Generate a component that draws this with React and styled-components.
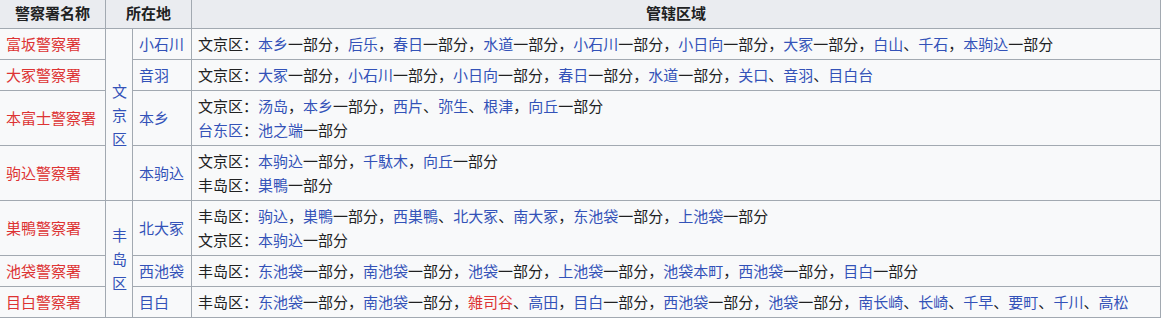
import React from 'react';
import styled, { createGlobalStyle } from 'styled-components';

const GlobalStyle = createGlobalStyle`
  body {
    margin: 0;
    background: #ffffff;
    font-family: "Noto Sans CJK SC", "Noto Sans", sans-serif;
  }
`;

const Table = styled.table`
  width: 1162px;
  margin: -3px 0 0 -1px;
  border-collapse: collapse;
  table-layout: fixed;
  background: #f8f9fa;
  color: #202122;
  font-size: 15px;
  line-height: 24px;
  border: 1px solid #a2a9b1;
`;

const HeadCell = styled.th`
  background: #eaecf0;
  border: 1px solid #a2a9b1;
  padding: 3px 6px;
  font-weight: bold;
  text-align: center;
  white-space: nowrap;
`;

const Cell = styled.td`
  border: 1px solid #a2a9b1;
  padding: 3px 6px;
  vertical-align: middle;
  text-align: ${(props) => props.$align || 'left'};
  white-space: ${(props) => (props.$wrap ? 'normal' : 'nowrap')};
`;

const Line = styled.div`
  white-space: nowrap;
`;

const Link = styled.a`
  color: ${(props) => (props.$red ? '#d33' : '#3352b8')};
  text-decoration: none;
`;

// [..] 蓝色链接, {..} 红色链接
const rich = (text) =>
  text.split(/(\[[^\]]+\]|\{[^}]+\})/).map((part, i) => {
    if (part.startsWith('[')) return <Link key={i}>{part.slice(1, -1)}</Link>;
    if (part.startsWith('{')) return <Link key={i} $red>{part.slice(1, -1)}</Link>;
    return part;
  });

const rows = [
  {
    name: '富坂警察署',
    ward: { text: '文京区', span: 4 },
    place: '小石川',
    lines: [
      '文京区：[本乡]一部分，[后乐]，[春日]一部分，[水道]一部分，[小石川]一部分，[小日向]一部分，[大冢]一部分，[白山]、[千石]，[本驹込]一部分',
    ],
  },
  {
    name: '大冢警察署',
    place: '音羽',
    lines: ['文京区：[大冢]一部分，[小石川]一部分，[小日向]一部分，[春日]一部分，[水道]一部分，[关口]、[音羽]、[目白台]'],
  },
  {
    name: '本富士警察署',
    place: '本乡',
    lines: ['文京区：[汤岛]，[本乡]一部分，[西片]、[弥生]、[根津]，[向丘]一部分', '[台东区]：[池之端]一部分'],
  },
  {
    name: '驹込警察署',
    place: '本驹込',
    lines: ['文京区：[本驹込]一部分，[千駄木]，[向丘]一部分', '丰岛区：[巣鴨]一部分'],
  },
  {
    name: '巣鴨警察署',
    ward: { text: '丰岛区', span: 3 },
    place: '北大冢',
    lines: [
      '丰岛区：[驹込]，[巣鴨]一部分，[西巣鴨]、[北大冢]、[南大冢]，[东池袋]一部分，[上池袋]一部分',
      '文京区：[本驹込]一部分',
    ],
  },
  {
    name: '池袋警察署',
    place: '西池袋',
    lines: ['丰岛区：[东池袋]一部分，[南池袋]一部分，[池袋]一部分，[上池袋]一部分，[池袋本町]，[西池袋]一部分，[目白]一部分'],
  },
  {
    name: '目白警察署',
    place: '目白',
    lines: [
      '丰岛区：[东池袋]一部分，[南池袋]一部分，{雑司谷}、[高田]，[目白]一部分，[西池袋]一部分，[池袋]一部分，[南长崎]、[长崎]、[千早]、[要町]、[千川]、[高松]',
    ],
  },
];

export default function App() {
  return (
    <>
      <GlobalStyle />
      <Table>
        <colgroup>
          <col style={{ width: 106 }} />
          <col style={{ width: 27 }} />
          <col style={{ width: 59 }} />
          <col />
        </colgroup>
        <thead>
          <tr>
            <HeadCell>警察署名称</HeadCell>
            <HeadCell colSpan={2}>所在地</HeadCell>
            <HeadCell>管辖区域</HeadCell>
          </tr>
        </thead>
        <tbody>
          {rows.map((row) => (
            <tr key={row.name}>
              <Cell>
                <Link $red>{row.name}</Link>
              </Cell>
              {row.ward && (
                <Cell rowSpan={row.ward.span} $align="center" $wrap>
                  <Link>{row.ward.text}</Link>
                </Cell>
              )}
              <Cell>
                <Link>{row.place}</Link>
              </Cell>
              <Cell>
                {row.lines.map((line) => (
                  <Line key={line}>{rich(line)}</Line>
                ))}
              </Cell>
            </tr>
          ))}
        </tbody>
      </Table>
    </>
  );
}
